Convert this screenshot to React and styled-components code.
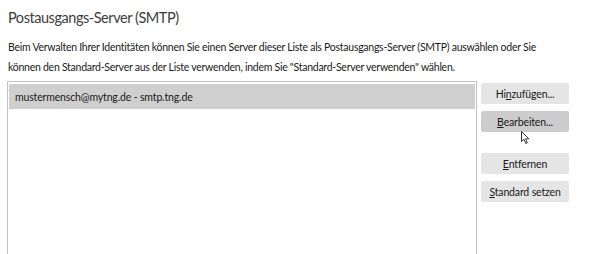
import React from "react";
import styled, { createGlobalStyle } from "styled-components";

const Global = createGlobalStyle`
  html, body { margin: 0; padding: 0; background: #ffffff; }
  body { font-family: "Lato", "Open Sans", sans-serif; color: #1a1a1a; }
`;

const Page = styled.div`
  width: 600px;
  height: 254px;
  padding: 0 7px;
  box-sizing: border-box;
  overflow: hidden;
  position: relative;
`;

const Title = styled.h1`
  margin: 0;
  padding: 8px 0 0 1px;
  font-size: 14.5px;
  font-weight: 400;
  line-height: 20px;
  letter-spacing: -0.45px;
  color: #3b3b3b;
`;

const Description = styled.p`
  margin: 9px 0 0;
  padding-left: 1px;
  font-size: 10.5px;
  letter-spacing: -0.26px;
  line-height: 20px;
  color: #1a1a1a;
  white-space: nowrap;
`;

const Main = styled.div`
  display: flex;
  align-items: flex-start;
  gap: 4px;
  margin-top: 4px;
`;

const ListBox = styled.div`
  width: 470px;
  height: 200px;
  box-sizing: border-box;
  border: 1px solid #c2c2c2;
  border-bottom: none;
  padding: 2px 1px 0 1px;
  background: #fff;
`;

const Row = styled.div`
  height: 25px;
  display: flex;
  align-items: center;
  padding-left: 6px;
  font-size: 10.5px;
  letter-spacing: -0.15px;
  color: #1a1a1a;
  background: ${(p) => (p.$selected ? "#cfcfcf" : "transparent")};
`;

const ButtonColumn = styled.div`
  display: flex;
  flex-direction: column;
  padding-top: 2px;
`;

const Button = styled.button`
  width: 88px;
  height: 21px;
  margin-top: ${(p) => p.$gap || 0}px;
  border: none;
  border-radius: 2px;
  background: ${(p) => (p.$hover ? "#cccccc" : "#e5e5e5")};
  font-family: "Lato", "Open Sans", sans-serif;
  font-size: 10.5px;
  letter-spacing: -0.15px;
  color: #1a1a1a;
  padding: 0;
  cursor: default;
  u { text-decoration: underline; text-underline-offset: 1px; }
`;

const Cursor = styled.svg`
  position: absolute;
  left: 521px;
  top: 131px;
`;

export default function App() {
  return (
    <Page>
      <Global />
      <Title>Postausgangs-Server (SMTP)</Title>
      <Description>
        Beim Verwalten Ihrer Identitäten können Sie einen Server dieser Liste als Postausgangs-Server (SMTP) auswählen oder Sie
        <br />
        können den Standard-Server aus der Liste verwenden, indem Sie "Standard-Server verwenden" wählen.
      </Description>
      <Main>
        <ListBox>
          <Row $selected>mustermensch@mytng.de - smtp.tng.de</Row>
        </ListBox>
        <ButtonColumn>
          <Button>Hi<u>n</u>zufügen...</Button>
          <Button $gap={7} $hover><u>B</u>earbeiten...</Button>
          <Button $gap={21}><u>E</u>ntfernen</Button>
          <Button $gap={7}><u>S</u>tandard setzen</Button>
        </ButtonColumn>
      </Main>
      <Cursor width="10" height="14" viewBox="0 0 10 14">
        <path d="M0.5 0.5 L0.5 10.5 L3 8.3 L4.8 12.5 L6.3 11.8 L4.6 7.8 L7.8 7.8 Z" fill="#fff" stroke="#333" strokeWidth="1" strokeLinejoin="miter" />
      </Cursor>
    </Page>
  );
}
